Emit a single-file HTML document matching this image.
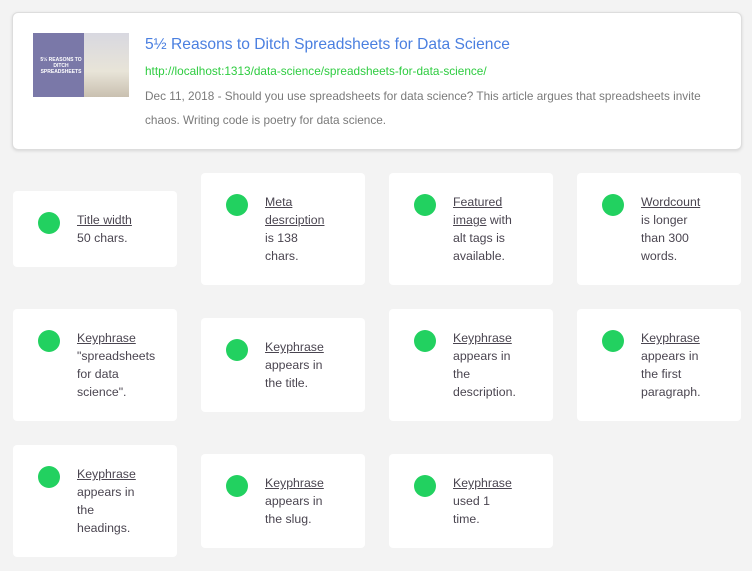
<!DOCTYPE html>
<html><head><style>
body{margin:0;background:#f3f3f3;width:752px;height:571px;overflow:hidden;font-family:"Liberation Sans",sans-serif;position:relative}
.top{position:absolute;left:12px;top:12px;width:728px;height:136px;background:#fff;border:1px solid #ddd;border-radius:6px;box-shadow:0 1px 3px rgba(0,0,0,.12)}
.img{position:absolute;left:20px;top:20px;width:96px;height:64px;background:#7a78a8;overflow:hidden}
.img .r{position:absolute;left:51px;top:0;width:45px;height:64px;background:linear-gradient(180deg,#d8d8e0,#e8e4d8 60%,#c9c0b0)}
.img .t{position:absolute;left:4px;top:24px;width:48px;color:#fff;font-size:5px;font-weight:bold;text-align:center;line-height:6px}
.title{position:absolute;left:132px;top:23px;font-size:15.6px;color:#4a7fe0}
.url{position:absolute;left:132px;top:51px;font-size:11.8px;color:#2ecc40}
.desc{position:absolute;left:132px;top:71px;width:570px;font-size:11.8px;color:#7a7a7a;line-height:24px}
.c{position:absolute;width:164px;background:#fff;border-radius:4px}
.c .d{position:absolute;left:25px;top:21px;width:22px;height:22px;border-radius:50%;background:#22d160}
.c .x{position:absolute;left:64px;top:20px;width:95px;font-size:12.3px;line-height:18px;color:#4a4550;white-space:nowrap}
.c u{text-decoration:underline}
</style></head><body>
<div class="top">
<div class="img"><div class="r"></div><div class="t">5½ REASONS TO DITCH SPREADSHEETS</div></div>
<div class="title">5½ Reasons to Ditch Spreadsheets for Data Science</div>
<div class="url">http://localhost:1313/data-science/spreadsheets-for-data-science/</div>
<div class="desc">Dec 11, 2018 - Should you use spreadsheets for data science? This article argues that spreadsheets invite chaos. Writing code is poetry for data science.</div>
</div>

<div class="c" style="left:13px;top:191px;height:76px"><div class="d"></div><div class="x"><u>Title width</u><br>50 chars.</div></div>
<div class="c" style="left:201px;top:173px;height:112px"><div class="d"></div><div class="x"><u>Meta</u><br><u>desrciption</u><br>is 138<br>chars.</div></div>
<div class="c" style="left:389px;top:173px;height:112px"><div class="d"></div><div class="x"><u>Featured</u><br><u>image</u> with<br>alt tags is<br>available.</div></div>
<div class="c" style="left:577px;top:173px;height:112px"><div class="d"></div><div class="x"><u>Wordcount</u><br>is longer<br>than 300<br>words.</div></div>

<div class="c" style="left:13px;top:309px;height:112px"><div class="d"></div><div class="x"><u>Keyphrase</u><br>"spreadsheets<br>for data<br>science".</div></div>
<div class="c" style="left:201px;top:318px;height:94px"><div class="d"></div><div class="x"><u>Keyphrase</u><br>appears in<br>the title.</div></div>
<div class="c" style="left:389px;top:309px;height:112px"><div class="d"></div><div class="x"><u>Keyphrase</u><br>appears in<br>the<br>description.</div></div>
<div class="c" style="left:577px;top:309px;height:112px"><div class="d"></div><div class="x"><u>Keyphrase</u><br>appears in<br>the first<br>paragraph.</div></div>

<div class="c" style="left:13px;top:445px;height:112px"><div class="d"></div><div class="x"><u>Keyphrase</u><br>appears in<br>the<br>headings.</div></div>
<div class="c" style="left:201px;top:454px;height:94px"><div class="d"></div><div class="x"><u>Keyphrase</u><br>appears in<br>the slug.</div></div>
<div class="c" style="left:389px;top:454px;height:94px"><div class="d"></div><div class="x"><u>Keyphrase</u><br>used 1<br>time.</div></div>
</body></html>
